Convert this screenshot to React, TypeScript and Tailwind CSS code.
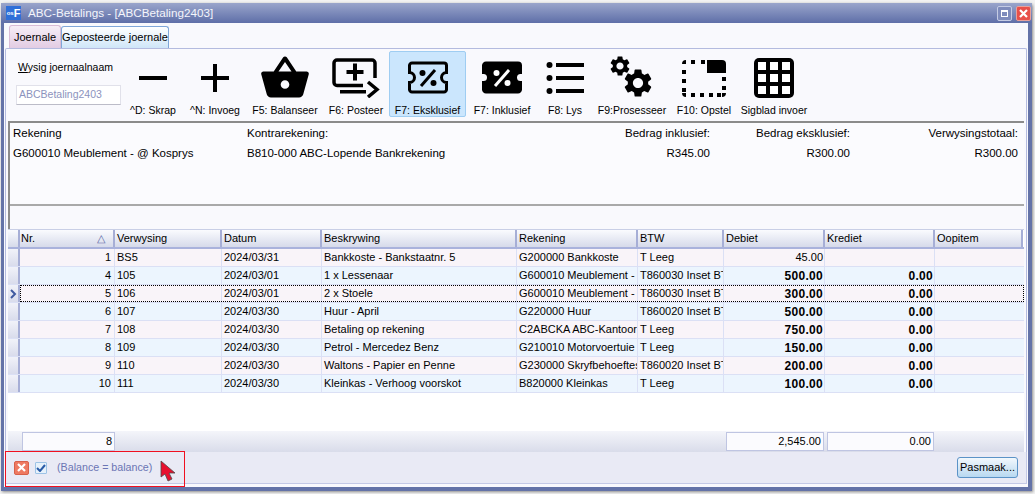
import React from "react";
import { MdShoppingBasket, MdSettings } from "react-icons/md";

const F = "[font-family:'Liberation_Sans',Arial,sans-serif]";

const Ticket = ({ filled }: { filled: boolean }) => {
  const d = "M4 2h32a2.500 2.500 0 0 1 2.500 2.500v7a5 5 0 0 0 0 10v7a2.500 2.500 0 0 1-2.500 2.500H4a2.500 2.500 0 0 1-2.500-2.500v-7a5 5 0 0 0 0-10v-7A2.500 2.500 0 0 1 4 2z";
  const ink = filled ? "#fff" : "#000";
  return (
    <svg width="40" height="34" viewBox="0 0 40 34">
      <path d={d} fill={filled ? "#000" : "none"} stroke="#000" strokeWidth="3" />
      <path d="M13 25 27 9" stroke={ink} strokeWidth="3" />
      <circle cx="14.500" cy="12" r="3" fill={ink} />
      <circle cx="25.500" cy="22" r="3" fill={ink} />
    </svg>
  );
};

const opstelDots = [
  [9, 0], [19, 0],
  [0, 10], [0, 19], [0, 28],
  [40, 17], [40, 26],
  [9, 33], [18, 33], [27, 33], [35, 33],
];

const tools: { label: string; w: string; icon: React.ReactNode; active?: boolean }[] = [
  {
    label: "^D: Skrap", w: "w-[60px]",
    icon: <svg width="30" height="30" viewBox="0 0 30 30"><rect x="1" y="13" width="28" height="4" /></svg>,
  },
  {
    label: "^N: Invoeg", w: "w-[64px]",
    icon: <svg width="30" height="30" viewBox="0 0 30 30"><rect x="1" y="13" width="28" height="4" /><rect x="13" y="1" width="4" height="28" /></svg>,
  },
  { label: "F5: Balanseer", w: "w-[76px]", icon: <MdShoppingBasket size={52} /> },
  {
    label: "F6: Posteer", w: "w-[66px]",
    icon: (
      <svg width="48" height="40" viewBox="0 0 48 40">
        <path d="M31 27.500H5a3 3 0 0 1-3-3V5a3 3 0 0 1 3-3h35a3 3 0 0 1 3 3v15" fill="none" stroke="#000" strokeWidth="3.500" />
        <path d="M23 5.500v17M14.500 14h17" stroke="#000" strokeWidth="4" fill="none" />
        <rect x="8" y="32" width="26" height="3.500" />
        <path d="M36 24l9 7.500-9 7.500" fill="none" stroke="#000" strokeWidth="3.500" />
      </svg>
    ),
  },
  { label: "F7: Eksklusief", w: "w-[77px]", icon: <Ticket filled={false} />, active: true },
  { label: "F7: Inklusief", w: "w-[72px]", icon: <Ticket filled /> },
  {
    label: "F8: Lys", w: "w-[54px]",
    icon: (
      <svg width="38" height="34" viewBox="0 0 38 34">
        <circle cx="3.500" cy="4" r="3" /><circle cx="3.500" cy="17" r="3" /><circle cx="3.500" cy="30" r="3" />
        <rect x="10" y="2" width="28" height="4" /><rect x="10" y="15" width="28" height="4" /><rect x="10" y="28" width="28" height="4" />
      </svg>
    ),
  },
  {
    label: "F9:Prosesseer", w: "w-[80px]",
    icon: (
      <svg width="44" height="44" viewBox="0 0 44 44">
        <MdSettings x={-2} y={-2} size={24} />
        <MdSettings x={11} y={10} size={34} />
      </svg>
    ),
  },
  {
    label: "F10: Opstel", w: "w-[64px]",
    icon: (
      <svg width="44" height="37" viewBox="0 0 44 37">
        {opstelDots.map(([x, y]) => <rect key={`${x}-${y}`} x={x} y={y} width="4" height="4" />)}
        <path d="M0 4a4 4 0 0 1 4-4v4zM0 33a4 4 0 0 0 4 4v-4zM44 33a4 4 0 0 1-4 4v-4z" />
        <path d="M25 0h15a4 4 0 0 1 4 4v9H25z" />
      </svg>
    ),
  },
  {
    label: "Sigblad invoer", w: "w-[76px]",
    icon: (
      <svg width="40" height="40" viewBox="0 0 40 40">
        <rect width="40" height="40" rx="5" />
        {[4, 16, 28].map((y) =>
          [4, 16, 28].map((x) => <rect key={`${x}-${y}`} x={x} y={y} width="8" height="8" fill="#fff" />)
        )}
      </svg>
    ),
  },
];

const cols = "grid-cols-[12px_95px_107px_100px_195px_121px_86px_101px_110px_88px]";
const heads = ["", "Nr.", "Verwysing", "Datum", "Beskrywing", "Rekening", "BTW", "Debiet", "Krediet", "Oopitem"];
const rows = [
  ["1", "BS5", "2024/03/31", "Bankkoste - Bankstaatnr. 5", "G200000 Bankkoste", "T Leeg", "45.00", ""],
  ["4", "105", "2024/03/01", "1 x Lessenaar", "G600010 Meublement - @ Kosprys", "T860030 Inset BTW", "500.00", "0.00"],
  ["5", "106", "2024/03/01", "2 x Stoele", "G600010 Meublement - @ Kosprys", "T860030 Inset BTW", "300.00", "0.00"],
  ["6", "107", "2024/03/30", "Huur - April", "G220000 Huur", "T860020 Inset BTW", "500.00", "0.00"],
  ["7", "108", "2024/03/30", "Betaling op rekening", "C2ABCKA ABC-Kantooruitrusting", "T Leeg", "750.00", "0.00"],
  ["8", "109", "2024/03/30", "Petrol - Mercedez Benz", "G210010 Motorvoertuie", "T Leeg", "150.00", "0.00"],
  ["9", "110", "2024/03/30", "Waltons - Papier en Penne", "G230000 Skryfbehoeftes", "T860020 Inset BTW", "200.00", "0.00"],
  ["10", "111", "2024/03/30", "Kleinkas - Verhoog voorskot", "B820000 Kleinkas", "T Leeg", "100.00", "0.00"],
];
const bold = "text-[12px] font-bold tracking-[0.3px]";

export default function App() {
  return (
    <div className={`${F} h-[494px] w-[1035px] overflow-hidden bg-[#f2f2f2] pl-[1px] pt-[3px] text-[11px] leading-none text-black`}>
      <div className="flex h-[488px] w-[1031px] flex-col rounded-t-[3px] border-b-4 border-l-[3px] border-r-4 border-[#6473a8] shadow-[1px_1px_3px_#8a8a8a]">
        {/* Title bar */}
        <div className="-ml-[3px] -mr-[4px] flex h-[20px] shrink-0 items-center bg-gradient-to-b from-[#9aa5cb] to-[#5f6fa8] pl-[5px] pr-[1px] text-white">
          <div className="flex h-[14px] w-[15px] items-center justify-center bg-[#2f6fd8] font-bold">
            <span className="text-[6px]">os</span>
            <span className="text-[11px]">F</span>
          </div>
          <span className="ml-[7px] text-[11.700px] text-[#f4f5fb]">ABC-Betalings - [ABCBetaling2403]</span>
          <div className="ml-auto flex gap-[4px]">
            <div className="flex h-[15px] w-[15px] items-center justify-center rounded-[2px] border border-[#c5cce4] bg-[#7f8cbc]">
              <div className="h-[7px] w-[7px] border border-t-2 border-white" />
            </div>
            <div className="flex h-[15px] w-[15px] items-center justify-center rounded-[2px] border border-[#e8a09a] bg-[#e8504a]">
              <svg width="9" height="9" viewBox="0 0 9 9"><path d="M1 1l7 7M8 1l-7 7" stroke="#fff" strokeWidth="2.200" /></svg>
            </div>
          </div>
        </div>

        <div className="flex min-h-0 flex-1 flex-col bg-[#f9f9fd]">
          {/* Tabs */}
          <div className="flex h-[25px] shrink-0 items-end pl-[5px]">
            <div className="flex h-[23px] w-[52px] items-center justify-center rounded-t-[3px] border border-b-0 border-[#d9bcd6] bg-gradient-to-b from-[#f6eef6] to-[#e3cce3]">Joernale</div>
            <div className="flex h-[22px] w-[108px] items-center justify-center rounded-t-[3px] border border-b-0 border-[#7fa7d9] bg-gradient-to-b from-[#ffffff] to-[#cfe6f8]">Geposteerde joernale</div>
          </div>

          {/* Page */}
          <div className="mx-[1px] flex min-h-0 flex-1 flex-col rounded-t-[2px] border-x border-t border-[#b4bbdf] bg-[#f9f9fd] pl-[2px] pr-[2px]">
            {/* Toolbar */}
            <div className="flex h-[72px] shrink-0 items-stretch pt-[2px]">
              <div className="w-[115px] shrink-0 pl-[8px] text-[10.500px]">
                <div className="mt-[11px] pl-[2px]"><span className="underline">W</span>ysig joernaalnaam</div>
                <div className="mt-[12px] flex h-[20px] w-[105px] items-center border border-[#e1e1ea] border-b-[#bcbcc8] bg-white pl-[2px] text-[#8c93bd]">ABCBetaling2403</div>
              </div>
              {tools.map((t) => (
                <div
                  key={t.label}
                  className={`flex ${t.w} h-[66px] shrink-0 flex-col items-center justify-between rounded-[2px] border pt-[1px] text-[10.500px] ${t.active ? "border-[#9fcdf2] bg-[#cbe6fd]" : "border-transparent"}`}
                >
                  <div className="flex h-[50px] items-center justify-center">{t.icon}</div>
                  <span className="whitespace-nowrap pb-[1px]">{t.label}</span>
                </div>
              ))}
            </div>

            {/* Summary */}
            <div className="flex h-[108px] shrink-0 flex-col border-l-2 border-t-2 border-[#8b8b8b]">
              <div className="h-[83px] border-b-2 border-[#a9a9a9] bg-[#fbfbfe] pl-[3px] pr-[3px] pt-[5px] text-[11.500px]">
                <div className="grid grid-cols-[234px_220px_243px_140px_168px] items-center gap-y-[8px]">
                  <span>Rekening</span>
                  <span>Kontrarekening:</span>
                  <span className="text-right">Bedrag inklusief:</span>
                  <span className="text-right">Bedrag eksklusief:</span>
                  <span className="text-right">Verwysingstotaal:</span>
                  <span>G600010 Meublement - @ Kosprys</span>
                  <span>B810-000 ABC-Lopende Bankrekening</span>
                  <span className="text-right">R345.00</span>
                  <span className="text-right">R300.00</span>
                  <span className="text-right">R300.00</span>
                </div>
              </div>
              <div className="flex-1 bg-[#f9f9fd]" />
            </div>

            {/* Grid */}
            <div className="flex min-h-0 flex-1 flex-col bg-white">
              <div className={`grid h-[20px] shrink-0 ${cols} border-b-2 border-t border-b-[#a9b2dc] border-t-[#c9cfe6]`}>
                {heads.map((h, i) => (
                  <div key={i} className={`flex items-center justify-between border-r-2 border-[#a6aed6] bg-gradient-to-b from-[#fafbfe] to-[#d6daea] pr-[8px] ${i === 1 ? "pl-[1px]" : "pl-[2px]"}`}>
                    <span>{h}</span>
                    {h === "Nr." && <span className="text-[11px] text-[#5d6ba8]">△</span>}
                  </div>
                ))}
              </div>
              {rows.map((r, i) => {
                const current = i === 2;
                const bg = i % 2 === 0 ? "bg-[#f9f4f9]" : "bg-[#ecf5fe]";
                return (
                  <div key={i} className={`relative grid h-[18px] shrink-0 ${cols} ${bg} border-b border-[#dbe0f5]`}>
                    <div className="flex items-center justify-center border-r-2 border-[#a6aed6] bg-gradient-to-b from-[#f1f2f9] to-[#d9dcec]">
                      {current && (
                        <svg width="7" height="10" viewBox="0 0 7 10"><path d="M1 1l4 4-4 4" fill="none" stroke="#3f5aa0" strokeWidth="2" /></svg>
                      )}
                    </div>
                    <div className="flex items-center justify-end border-r border-[#dbe0f5] pr-[3px]">{r[0]}</div>
                    {[1, 2, 3, 4, 5].map((k) => (
                      <div key={k} className="flex items-center overflow-hidden whitespace-nowrap border-r border-[#dbe0f5] pl-[2px]">{r[k]}</div>
                    ))}
                    <div className={`flex items-center justify-end border-r border-[#dbe0f5] pr-[1px] ${i > 0 ? bold : ""}`}>{r[6]}</div>
                    <div className={`flex items-center justify-end border-r border-[#dbe0f5] pr-[1px] ${bold}`}>{r[7]}</div>
                    <div />
                    {current && <div className="pointer-events-none absolute inset-y-0 left-[12px] right-0 border border-dotted border-black" />}
                  </div>
                );
              })}
              <div className="flex-1" />
              {/* Totals */}
              <div className={`grid h-[21px] shrink-0 ${cols} bg-gradient-to-b from-[#f4f5fa] to-[#d9dcea]`}>
                <div />
                <div className="my-[1px] ml-[2px] flex items-center justify-end border border-[#bfc5e2] bg-[#fbfbfe] pr-[2px]">8</div>
                <div className="col-span-5" />
                <div className="my-[1px] ml-[2px] mr-[1px] flex items-center justify-end border border-[#bfc5e2] bg-[#fbfbfe] pr-[2px]">2,545.00</div>
                <div className="my-[1px] ml-[2px] mr-[1px] flex items-center justify-end border border-[#bfc5e2] bg-[#fbfbfe] pr-[2px]">0.00</div>
              </div>
            </div>
          </div>

          {/* Filter bar */}
          <div className="relative mx-[1px] flex h-[32px] shrink-0 items-center border-x border-b border-[#c4c9e6] bg-[#e9eaf5] pl-[8px] pr-[8px]">
            <div className="flex h-[14px] w-[15px] items-center justify-center rounded-[2px] border border-[#d8604a] bg-[#ee7a62]">
              <svg width="9" height="9" viewBox="0 0 9 9"><path d="M1 1l7 7M8 1l-7 7" stroke="#fff" strokeWidth="2.200" /></svg>
            </div>
            <div className="ml-[6px] flex h-[12px] w-[12px] items-center justify-center rounded-[1px] border border-[#9dc3e6] bg-[#e6f1fb]">
              <svg width="10" height="8" viewBox="0 0 10 8"><path d="M1 4l3 3 5-6" fill="none" stroke="#2a5ca8" strokeWidth="2" /></svg>
            </div>
            <span className="ml-[10px] text-[10.700px] text-[#6b75b4]">(Balance = balance)</span>
            <button className="ml-auto flex h-[21px] w-[61px] items-center justify-center rounded-[3px] border border-[#5b93c7] bg-gradient-to-b from-[#f2f8fd] to-[#b8d8f0]">Pasmaak...</button>
            <div className="pointer-events-none absolute -left-[1px] -top-[1px] h-[36px] w-[180px] border border-[#f01020]" />
            <svg className="pointer-events-none absolute left-[154px] top-[8px]" width="16" height="22" viewBox="0 0 16 22">
              <path d="M1 1v16l4-3 3 7 4-2-3-6h6z" fill="#e8102e" stroke="#4a4a4a" strokeWidth=".8" />
            </svg>
          </div>
          <div className="h-[3px] shrink-0" />
        </div>
      </div>
    </div>
  );
}
